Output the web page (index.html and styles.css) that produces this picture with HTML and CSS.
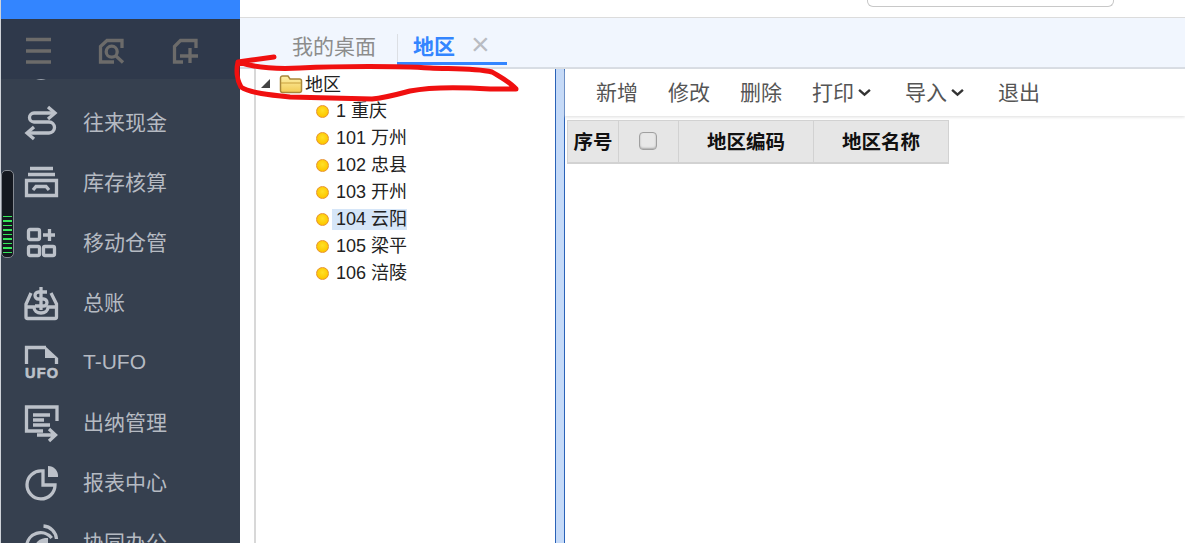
FILE: index.html
```html
<!DOCTYPE html>
<html>
<head>
  <meta charset="UTF-8">
  <title>地区</title>
  <link rel="stylesheet" href="styles.css">
</head>
<body>
  <div class="app">
    <div class="sidebar">
      <div class="brand"></div>
      <div class="side-head">
        <svg class="head-icon" viewBox="0 0 28 28"><path d="M1 4.500H26M1 16H26M1 27H26"/></svg>
        <svg class="head-icon" viewBox="0 0 28 28"><path d="M24 13V5.500H9L2.500 11.500V27H16"/><circle cx="13.700" cy="16.700" r="5.500"/><path d="M18 21L25 27.500"/></svg>
        <svg class="head-icon" viewBox="0 0 28 28"><path d="M25 13V5.500H9.500L3.500 11.500V27H12"/><path d="M19 13V28M9 21H27"/></svg>
      </div>
      <div class="menu">
        <div class="menu-inner">
          <div class="menu-item">
            <svg class="menu-icon" viewBox="0 0 36 36"><circle cx="18" cy="18" r="16"/></svg>
          </div>
          <div class="menu-item">
            <svg class="menu-icon" viewBox="0 0 36 36"><path d="M31 9H11a4.500 4.500 0 0 0 0 9H26a5.500 5.500 0 0 1 0 11H5"/><path d="M25 3L32 9L25 15M11 23L4 29L11 35"/></svg>
            <span>往来现金</span>
          </div>
          <div class="menu-item">
            <svg class="menu-icon" viewBox="0 0 36 36"><path d="M7 4.500H30M5 10.500H32"/><path d="M3.500 16.500H33.500V31.500H3.500Z"/><path d="M10 26L13 22.500H23L26 26"/></svg>
            <span>库存核算</span>
          </div>
          <div class="menu-item">
            <svg class="menu-icon" viewBox="0 0 36 36"><rect x="5.500" y="5.500" width="11" height="10" rx="1.500"/><rect x="5.500" y="22.500" width="11" height="9" rx="1.500"/><rect x="20.500" y="22.500" width="11" height="9" rx="1.500"/><path d="M20 11H32M26.500 5V17"/></svg>
            <span>移动仓管</span>
          </div>
          <div class="menu-item">
            <svg class="menu-icon" viewBox="0 0 36 36"><path d="M8 9L3 20V33a1.500 1.500 0 0 0 1.500 1.500H32a1.500 1.500 0 0 0 1.500-1.500V20L28 9"/><path d="M3 23H11c0 4 3 6 7 6s7-2 7-6H33"/><path d="M24 8H15.500a3.500 3.500 0 0 0 0 7H20.500a3.500 3.500 0 0 1 0 7H12M18 3V26"/></svg>
            <span>总账</span>
          </div>
          <div class="menu-item">
            <svg class="menu-icon" viewBox="0 0 36 36"><path d="M3.500 20V3.500H23M33.500 14V20"/><path class="solid" d="M22 2L35 14H22Z"/><text class="ufo" x="2" y="34" textLength="33" lengthAdjust="spacing">UFO</text></svg>
            <span class="latin">T-UFO</span>
          </div>
          <div class="menu-item">
            <svg class="menu-icon" viewBox="0 0 36 36"><path d="M34 17V3H3.500V27H20"/><path d="M10 11H27M10 16H21M10 21H27"/><path d="M14 31H32M26 25L32.500 31L26 37"/></svg>
            <span>出纳管理</span>
          </div>
          <div class="menu-item">
            <svg class="menu-icon" viewBox="0 0 36 36"><path d="M19 7A14 14 0 1 0 32 21H20V7Z"/><path class="solid" d="M25 2A10 10 0 0 1 35 13H25Z"/></svg>
            <span>报表中心</span>
          </div>
          <div class="menu-item">
            <svg class="menu-icon" viewBox="0 0 36 36"><path d="M20.500 2A14 14 0 0 1 33.500 15M3.700 22A14 14 0 0 1 28.700 14"/><path class="solid" d="M12 24C12 18 16 15 22 14L25 14V30H12Z"/></svg>
            <span>协同办公</span>
          </div>
        </div>
      </div>
    </div>

    <div class="main">
      <div class="topbar">
        <div class="search-box"></div>
      </div>
      <div class="tabs">
        <div class="tab">我的桌面</div>
        <div class="tab tab-active">地区<span class="tab-close">×</span></div>
      </div>
      <div class="content">
        <div class="tree-panel">
          <div class="tree-root">
            <span class="tree-arrow"></span>
            <svg class="folder" viewBox="0 0 24 20">
              <defs>
                <linearGradient id="folderFill" x1="0" y1="0" x2="0" y2="1">
                  <stop offset="0" stop-color="#fdf0a8"/>
                  <stop offset="1" stop-color="#f2cb55"/>
                </linearGradient>
              </defs>
              <path d="M1.500 17V4a2 2 0 0 1 2-2H9l2 3H20.500a2 2 0 0 1 2 2V17a2 2 0 0 1-2 1.500H3.500a2 2 0 0 1-2-1.500Z" fill="url(#folderFill)" stroke="#a9873a" stroke-width="1.500"/>
              <path d="M2 9H22" stroke="#c9a13f" stroke-width="1" fill="none"/>
            </svg>
            <span class="root-label">地区</span>
          </div>
          <ul class="tree-list">
            <li><i class="dot"></i><span class="node">1 重庆</span></li>
            <li><i class="dot"></i><span class="node">101 万州</span></li>
            <li><i class="dot"></i><span class="node">102 忠县</span></li>
            <li><i class="dot"></i><span class="node">103 开州</span></li>
            <li><i class="dot"></i><span class="node selected">104 云阳</span></li>
            <li><i class="dot"></i><span class="node">105 梁平</span></li>
            <li><i class="dot"></i><span class="node">106 涪陵</span></li>
          </ul>
        </div>
        <div class="splitter"></div>
        <div class="grid-panel">
          <div class="toolbar">
            <span class="tool">新增</span>
            <span class="tool">修改</span>
            <span class="tool">删除</span>
            <span class="tool tool-drop">打印<svg class="chevron" viewBox="0 0 12 8"><path d="M1 1.500L6 6L11 1.500"/></svg></span>
            <span class="tool tool-drop">导入<svg class="chevron" viewBox="0 0 12 8"><path d="M1 1.500L6 6L11 1.500"/></svg></span>
            <span class="tool">退出</span>
          </div>
          <table class="grid">
            <tr>
              <th class="col-no">序号</th>
              <th class="col-check"><span class="checkbox"></span></th>
              <th class="col-field">地区编码</th>
              <th class="col-field">地区名称</th>
            </tr>
          </table>
        </div>
      </div>
    </div>
  </div>

  <!-- things lying on top of the screenshot -->
  <div class="meter"><div class="meter-bars"></div></div>
  <svg class="scribble" viewBox="0 0 1185 543">
    <path d="M274 57L252 60L238 62C236 70 237 80 241 87C250 93 270 95 290 97L372 99C385 98 395 95 410 91C430 87 460 87 490 89L516 89C510 82 500 77 492 72C475 68 450 69 430 68C400 66 340 66 300 68C280 69 255 68 238 62"/>
  </svg>
</body>
</html>
```

FILE: styles.css
```css
* {
  box-sizing: border-box;
}
html, body {
  margin: 0;
  height: 543px;
  overflow: hidden;
  background: #fff;
  font-family: "Liberation Sans", "Noto Sans CJK SC", sans-serif;
}
.app {
  display: flex;
  height: 543px;
}

/* left menu */
.sidebar {
  width: 240px;
  flex: none;
  display: flex;
  flex-direction: column;
  background: #36404f;
  border-left: 1px solid #cfd3d9;
}
.brand {
  height: 19px;
  flex: none;
  background: #3385ff;
}
.side-head {
  height: 60px;
  flex: none;
  display: flex;
  align-items: center;
  gap: 45px;
  padding-left: 24px;
  background: #2f394b;
}
.head-icon {
  width: 28px;
  height: 28px;
  overflow: visible;
  fill: none;
  stroke: #6c6b6a;
  stroke-width: 3.300;
}
.menu {
  flex: 1;
  overflow: hidden;
}
.menu-inner {
  margin-top: -47px;
}
.menu-item {
  height: 60px;
  display: flex;
  align-items: center;
  gap: 24px;
  padding-left: 22px;
  font-size: 21px;
  color: #b5bac2;
}
.menu-item span {
  margin-top: -2px;
}
.menu-item .latin {
  margin-top: 0;
}
.menu-icon {
  width: 36px;
  height: 36px;
  flex: none;
  overflow: visible;
  fill: none;
  stroke: #bcc1c9;
  stroke-width: 3.300;
}
.menu-icon .solid {
  fill: #bcc1c9;
  stroke: none;
}
.menu-icon .ufo {
  fill: #bcc1c9;
  stroke: #bcc1c9;
  stroke-width: 0.600;
  font-size: 14.500px;
  font-weight: bold;
}

.main {
  flex: 1;
  min-width: 0;
  display: flex;
  flex-direction: column;
}
.topbar {
  height: 18px;
  flex: none;
  border-bottom: 1px solid #dcdcdc;
}
.search-box {
  width: 247px;
  height: 7px;
  margin-left: 627px;
  border: 1px solid #c8c8c8;
  border-top: 0;
  border-radius: 0 0 6px 6px;
}

/* tabs */
.tabs {
  height: 51px;
  flex: none;
  display: flex;
  padding-left: 36px;
  background: #f1f6fe;
  border-bottom: 2px solid #d8dde4;
}
.tab {
  height: 47px;
  padding: 14px 21px 0 16px;
  font-size: 21px;
  line-height: 30px;
  color: #8c8c8c;
}
.tab-active {
  position: relative;
  width: 110px;
  padding-left: 16px;
  padding-right: 0;
  font-weight: bold;
  color: #3385ff;
  border-bottom: 3px solid #3385ff;
}
.tab-active::before {
  content: "";
  position: absolute;
  left: 0;
  top: 16px;
  height: 28px;
  border-left: 1px solid #dcdfe4;
}
.tab-close {
  margin-left: 16px;
  font-size: 32px;
  line-height: 0;
  vertical-align: -1px;
  font-weight: normal;
  color: #b9bcc2;
}

.content {
  flex: 1;
  display: flex;
  min-height: 0;
}

/* tree */
.tree-panel {
  flex: none;
  margin-left: 14px;
  padding-top: 1px;
  width: 301px;
  border-left: 2px solid #d8d8d8;
  font-size: 18px;
  color: #222;
}
.tree-root {
  height: 27px;
  display: flex;
  align-items: center;
  padding-left: 5px;
}
.tree-arrow {
  width: 0;
  height: 0;
  margin-right: 9px;
  border-style: solid;
  border-width: 0 0 9px 9px;
  border-color: transparent transparent #444 transparent;
}
.folder {
  width: 24px;
  height: 20px;
}
.root-label {
  margin: -2px 0 0 2px;
}
.tree-list {
  list-style: none;
  margin: 1px 0 0;
  padding: 0 0 0 60px;
}
.tree-list li {
  height: 27px;
  display: flex;
  align-items: center;
}
.dot {
  width: 13px;
  height: 13px;
  flex: none;
  border-radius: 50%;
  border: 1.500px solid #e8932e;
  background: radial-gradient(circle at 50% 40%, #ffe028 0, #fdc800 70%, #f2a81c 100%);
}
.node {
  margin-left: 3px;
  padding: 0 0 0 4px;
  line-height: 21px;
}
.selected {
  background: #d6e6f8;
}

.splitter {
  width: 10px;
  flex: none;
  background: #c5daf8;
  border-left: 1px solid #2a62b8;
  border-right: 1px solid #2a62b8;
}

/* toolbar and table */
.grid-panel {
  flex: 1;
  min-width: 0;
}
.toolbar {
  height: 47px;
  display: flex;
  align-items: center;
  padding: 0 0 3px 31px;
  font-size: 21px;
  color: #555;
  box-shadow: 0 1px 3px #ddd;
}
.tool {
  margin-right: 30px;
  white-space: nowrap;
}
.tool-drop {
  margin-right: 34px;
}
.chevron {
  width: 13px;
  height: 9px;
  margin-left: 4px;
  vertical-align: 3px;
  fill: none;
  stroke: #333;
  stroke-width: 2.200;
}
.grid {
  margin: 4px 0 0 2px;
  border-collapse: collapse;
  table-layout: fixed;
  width: 381px;
  height: 44px;
  font-size: 19.500px;
}
.grid th {
  padding: 0 0 2px;
  background: #e6e6e6;
  border: 1px solid #d2d2d2;
  border-bottom-width: 2px;
  color: #111;
}
.col-no {
  width: 51px;
}
.col-check {
  width: 60px;
}
.col-field {
  width: 135px;
}
.checkbox {
  display: block;
  width: 18px;
  height: 18px;
  margin: 0 auto;
  position: relative;
  left: -1px;
  background: #e8e8e8;
  border: 1px solid #a0a0a0;
  border-radius: 4px;
  box-shadow: inset 0 -1px 2px #aaa;
}

/* recording widget at the screen edge */
.meter {
  position: absolute;
  left: 1px;
  top: 170px;
  width: 13px;
  height: 88px;
  padding: 45px 1px 0;
  background: #14181f;
  border: 1px solid #858a92;
  border-radius: 5px;
}
.meter-bars {
  height: 38px;
  background: repeating-linear-gradient(#36e85a 0, #36e85a 1.500px, transparent 1.500px, transparent 4.500px);
}
/* red pen marks */
.scribble {
  position: absolute;
  left: 0;
  top: 0;
  width: 1185px;
  height: 543px;
  fill: none;
  stroke: #f01010;
  stroke-width: 5;
  stroke-linejoin: round;
  stroke-linecap: round;
  pointer-events: none;
}
```
